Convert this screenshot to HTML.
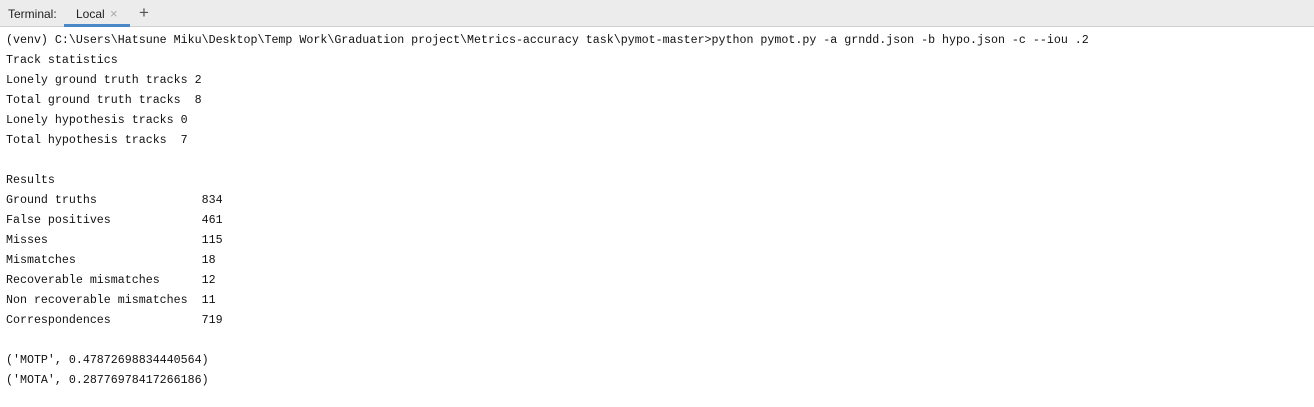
<!DOCTYPE html>
<html><head><style>
body{margin:0;width:1314px;height:407px;background:#fff;overflow:hidden;position:relative;font-family:"Liberation Sans",sans-serif}
.hdr{position:absolute;left:0;top:0;width:1314px;height:27px;background:#ececec;border-bottom:1px solid #d0d0d0;box-sizing:border-box}
.hdr span{position:absolute;top:7px;font-size:12px;color:#222}
.ul{position:absolute;left:64px;top:24px;width:66px;height:3px;background:#4a88c7}
pre{position:absolute;left:6px;top:31px;margin:0;font-family:"Liberation Mono",monospace;font-size:11.65px;line-height:20px;color:#111}
</style></head><body>
<div class="hdr">
<span style="left:8px">Terminal:</span>
<span style="left:76px">Local</span>
<span style="left:110px;color:#aaa;font-size:13px;top:6px">×</span>
<span style="left:139px;font-size:17px;top:3px;color:#555">+</span>
<div class="ul"></div>
</div>
<pre>(venv) C:\Users\Hatsune Miku\Desktop\Temp Work\Graduation project\Metrics-accuracy task\pymot-master>python pymot.py -a grndd.json -b hypo.json -c --iou .2
Track statistics
Lonely ground truth tracks 2
Total ground truth tracks  8
Lonely hypothesis tracks 0
Total hypothesis tracks  7

Results
Ground truths               834
False positives             461
Misses                      115
Mismatches                  18
Recoverable mismatches      12
Non recoverable mismatches  11
Correspondences             719

('MOTP', 0.47872698834440564)
('MOTA', 0.28776978417266186)</pre>
</body></html>
